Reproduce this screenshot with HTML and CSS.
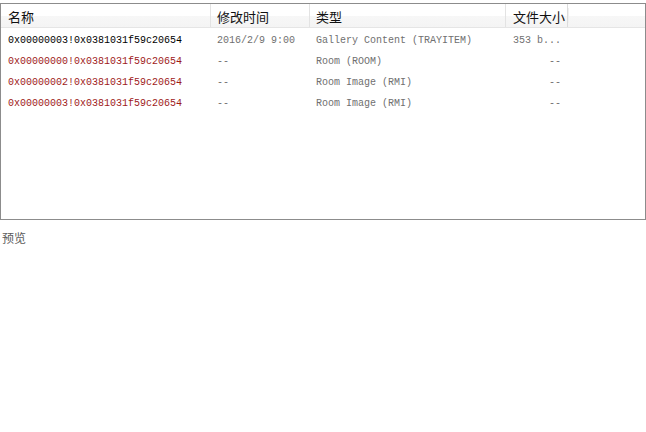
FILE: index.html
```html
<!DOCTYPE html>
<html>
<head>
<meta charset="utf-8">
<link rel="stylesheet" href="styles.css">
</head>
<body>
<div class="list">
  <div class="row head">
    <div class="c c1">名称</div>
    <div class="c c2">修改时间</div>
    <div class="c c3">类型</div>
    <div class="c c4">文件大小</div>
    <div class="c c5"></div>
  </div>
  <div class="row item">
    <div class="c c1 name">0x00000003!0x0381031f59c20654</div>
    <div class="c c2 dim">2016/2/9 9:00</div>
    <div class="c c3 dim">Gallery Content (TRAYITEM)</div>
    <div class="c c4 dim">353 b...</div>
  </div>
  <div class="row item">
    <div class="c c1 name red">0x00000000!0x0381031f59c20654</div>
    <div class="c c2 dim">--</div>
    <div class="c c3 dim">Room (ROOM)</div>
    <div class="c c4 dim right">--</div>
  </div>
  <div class="row item">
    <div class="c c1 name red">0x00000002!0x0381031f59c20654</div>
    <div class="c c2 dim">--</div>
    <div class="c c3 dim">Room Image (RMI)</div>
    <div class="c c4 dim right">--</div>
  </div>
  <div class="row item">
    <div class="c c1 name red">0x00000003!0x0381031f59c20654</div>
    <div class="c c2 dim">--</div>
    <div class="c c3 dim">Room Image (RMI)</div>
    <div class="c c4 dim right">--</div>
  </div>
</div>
<div class="preview">预览</div>
</body>
</html>
```
FILE: styles.css
```css
html, body {
  margin: 0;
  padding: 0;
  background: #ffffff;
}
body {
  font-family: "Liberation Mono", "Noto Sans CJK SC", monospace;
}
.list {
  margin-top: 3px;
  width: 644px;
  height: 215px;
  border: 1px solid #8c8c8c;
  background: #ffffff;
  overflow: hidden;
}
.row {
  display: flex;
  height: 21px;
  align-items: center;
}
.item {
  box-sizing: border-box;
  padding-top: 4px;
}
.head {
  height: 23px;
  border-bottom: 1px solid #e5e5e5;
  background: linear-gradient(#ffffff 0%, #ffffff 50%, #f7f7f7 51%, #f4f4f4 100%);
  font-family: "Noto Sans CJK SC", sans-serif;
  font-size: 13px;
  color: #111111;
  align-items: stretch;
}
.head .c {
  display: flex;
  align-items: center;
  padding-top: 1px;
  border-right: 1px solid #e3e3e3;
}
.head .c4 {
  border-right: 1px solid #dcdcdc;
  box-shadow: 5px 0 0 -4px #f0f0f0;
}
.head .c5 {
  border-right: none;
  flex: 1;
}
.c {
  box-sizing: border-box;
  white-space: nowrap;
  overflow: hidden;
  padding-left: 6px;
}
.c1 { width: 210px; padding-left: 7px; }
.c2 { width: 99px; }
.c3 { width: 196px; }
.c4 { width: 62px; padding-left: 7px; padding-right: 7px; }
.name {
  font-size: 10px;
  color: #000000;
}
.red { color: #9e1a1a; }
.dim {
  font-size: 10px;
  color: #707070;
}
.right { text-align: right; }
.preview {
  margin-top: 9px;
  padding-left: 2px;
  font-family: "Noto Sans CJK SC", sans-serif;
  font-size: 12px;
  color: #5a5a5a;
}
```
